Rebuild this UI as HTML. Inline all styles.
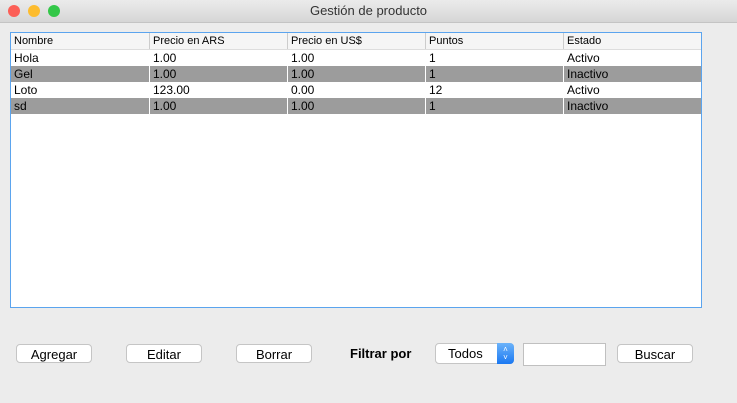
<!DOCTYPE html><html><head><style>
body{margin:0;width:737px;height:403px;background:#ececec;font-family:"Liberation Sans",sans-serif;position:relative;overflow:hidden}
.tb{position:absolute;left:0;top:0;width:737px;height:22px;background:linear-gradient(#ebebeb,#d6d6d6);border-bottom:1px solid #c4c4c4;text-align:center;font-size:13px;line-height:22px;color:#333}
.dot{position:absolute;top:5px;width:12px;height:12px;border-radius:50%}
.tbl{position:absolute;left:10px;top:32px;width:690px;height:274px;border:1px solid #5ba4ee;background:#fff}
.row{position:absolute;left:0;width:690px;height:16px;font-size:12px;line-height:16px}
.row span{position:absolute;top:0;height:16px;padding-left:3px;box-sizing:border-box}
.h{background:#f5f5f5;font-size:11px;top:0;border-bottom:1px solid #ddd}
.h span{border-right:1px solid #ccc}
.g{background:#9c9c9c}
.g span{border-right:1px solid #fff}
.btn{position:absolute;top:344px;width:76px;height:19px;background:#fff;border:1px solid #c5c5c5;border-radius:4px;font-size:13px;text-align:center;line-height:19px;box-sizing:border-box}
</style></head><body>
<div class="tb">Gestión de producto
<div class="dot" style="left:8px;background:#fc5f57"></div><div class="dot" style="left:28px;background:#fdbc2e"></div><div class="dot" style="left:48px;background:#33c748"></div></div>
<div class="tbl">
<div class="row h"><span style="left:0;width:139px">Nombre</span><span style="left:139px;width:138px">Precio en ARS</span><span style="left:277px;width:138px">Precio en US$</span><span style="left:415px;width:138px">Puntos</span><span style="left:553px;width:137px;border:0">Estado</span></div>
<div class="row" style="top:17px"><span style="left:0">Hola</span><span style="left:139px">1.00</span><span style="left:277px">1.00</span><span style="left:415px">1</span><span style="left:553px">Activo</span></div>
<div class="row g" style="top:33px"><span style="left:0;width:139px">Gel</span><span style="left:139px;width:138px">1.00</span><span style="left:277px;width:138px">1.00</span><span style="left:415px;width:138px">1</span><span style="left:553px;border:0">Inactivo</span></div>
<div class="row" style="top:49px"><span style="left:0">Loto</span><span style="left:139px">123.00</span><span style="left:277px">0.00</span><span style="left:415px">12</span><span style="left:553px">Activo</span></div>
<div class="row g" style="top:65px"><span style="left:0;width:139px">sd</span><span style="left:139px;width:138px">1.00</span><span style="left:277px;width:138px">1.00</span><span style="left:415px;width:138px">1</span><span style="left:553px;border:0">Inactivo</span></div>
</div>
<div class="btn" style="left:16px">Agregar</div>
<div class="btn" style="left:126px">Editar</div>
<div class="btn" style="left:236px">Borrar</div>
<div style="position:absolute;left:350px;top:345px;font-size:13px;font-weight:bold;line-height:17px">Filtrar por</div>
<div style="position:absolute;left:435px;top:343px;width:79px;height:21px;background:#fff;border:1px solid #c5c5c5;border-radius:4px;box-sizing:border-box;font-size:13px;line-height:19px;padding-left:12px">Todos
<div style="position:absolute;right:-1px;top:-1px;width:17px;height:21px;background:linear-gradient(#6cb3fa,#1a78f2);border-radius:0 4px 4px 0;color:#fff;font-size:8px;line-height:8px;text-align:center;padding-top:3px;box-sizing:border-box">˄<br>˅</div></div>
<div style="position:absolute;left:523px;top:343px;width:83px;height:23px;background:#fff;border:1px solid #c0c0c0;box-sizing:border-box"></div>
<div class="btn" style="left:617px">Buscar</div>
</body></html>
